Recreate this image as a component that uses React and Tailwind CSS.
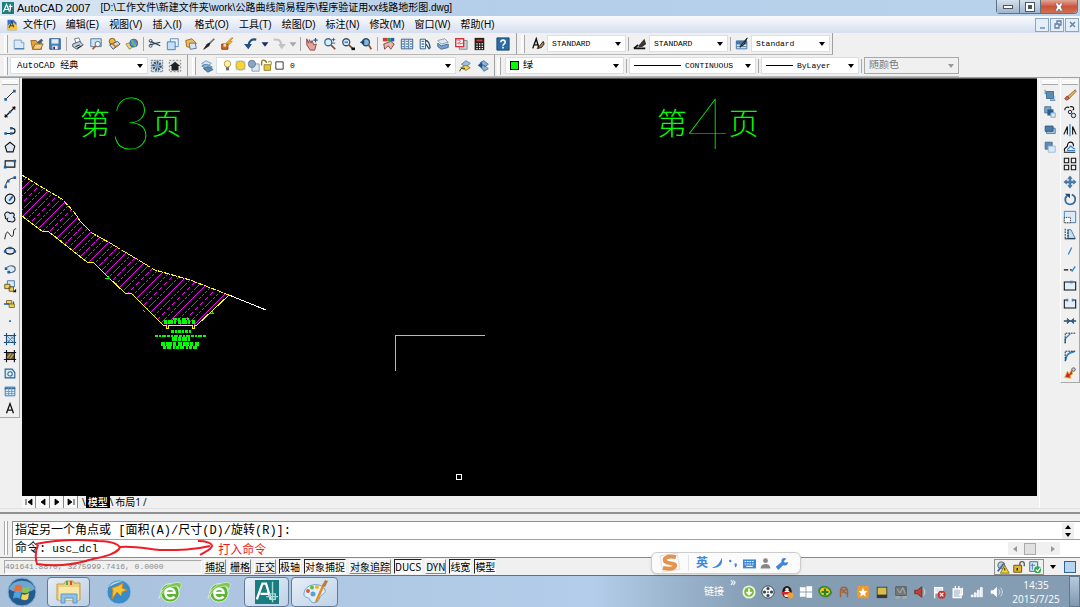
import React from "react";

const B = "#1f5f9f";
const K = "#111111";
const O = "#e8a33a";

/* 16x16 drawings, keyed by command name */
const art = {
  app: <><rect width="16" height="16" fill="#1f7f80" /><path d="M2 13 6 3l4 10M4 10h5M11 3v10M9 6h5M9 12h6" stroke="#fff" strokeWidth="1.6" fill="none" /><path d="M13 9v6M10 12h6" stroke="#0b3b3c" /></>,
  doc: <><path d="M2 1h8l4 4v10H2z" fill="#3a76c4" /><path d="M1 15 3 8l6-4 6 5v6z" fill="#f3c545" /><path d="M4 12 8 3l2 8M5 9h5" stroke="#334" strokeWidth="1.3" fill="none" /></>,
  new: <><path d="M2.5 3.5h8l3 3v7h-11z" fill="#dbeaf8" stroke="#6f9cc8" /><path d="M10.5 3.5v3h3" fill="#fff" stroke="#6f9cc8" /><path d="M3 13.5h11" stroke={B} /></>,
  open: <><path d="M1 4h6l1 2h5v8H3z" fill={O} stroke="#8f6420" /><path d="M3 14 6 8h9l-3 6z" fill="#f4cf7e" stroke="#8f6420" /><path d="M8 6l5-4 2 2-4 4z" fill="#44607c" /></>,
  save: <><path d="M2 2h12v12H2z" fill="#4b84bb" stroke="#1e4f80" /><path d="M4 2.5h8v5H4z" fill="#dcecf9" /><path d="M5 10h6v4H5z" fill="#eef" /><path d="M6 11h2v3H6z" fill="#234" /></>,
  print: <><path d="M4 2l5-1 2 5-5 2z" fill="#fff" stroke="#57738e" /><path d="M2 8l8-3 4 4-7 5-5-3z" fill="#c5d0dc" stroke="#3b5065" /><path d="M5 11l5-2M7 13l5-3" stroke={K} /></>,
  preview: <><path d="M2 2h12v9H2z" fill="#cfe2f5" stroke="#47759f" /><circle cx="10" cy="8" r="3" fill="#eef7ff" stroke="#566" /><path d="M8 10l-4 4" stroke="#a5572b" strokeWidth="2" /></>,
  publish: <><circle cx="6" cy="5" r="3.5" fill="#f1b63f" stroke="#7d5413" /><path d="M3 9l9-4 3 3-8 6z" fill="#d4dde6" stroke="#38495a" /><path d="M8 12l5-3M5 7l5 4" stroke="#c77716" strokeWidth="1.5" /></>,
  web: <><path d="M1 8l9-3 4 3-9 6z" fill="#f1cf6f" stroke="#8e8a50" /><circle cx="10" cy="7" r="4.5" fill="#4f93d3" stroke="#285f94" /><path d="M7 4c3 1 1 3 3 4s2 2 1 3" stroke="#75bd55" strokeWidth="2" fill="none" /><path d="M12 4l2 2" stroke="#d43" strokeWidth="1.5" /></>,
  cut: <><path d="M3 5l11 5M2 9l12-3" stroke="#2c4255" strokeWidth="1.3" /><circle cx="3" cy="4.5" r="1.7" fill="none" stroke="#2c4255" /><circle cx="3" cy="10" r="1.7" fill="none" stroke="#2c4255" /></>,
  copy: <><path d="M5 2h9v9H5z" fill="#eaf3fc" stroke="#5088bd" /><path d="M1.5 5.5h9v9h-9z" fill="#c7dff4" stroke="#397ab7" /></>,
  paste: <><path d="M2 4l7-2 5 5-3 6-8-2z" fill="#f1bb59" stroke="#946219" /><path d="M6 7h7l1 6-7 1z" fill="#d6e7f6" stroke="#4e7092" /></>,
  brush: <><path d="M14 2 8 8" stroke="#607280" strokeWidth="2" /><path d="M9 7l-3 1-4 6 6-4z" fill="#24211e" stroke="#24211e" /></>,
  block: <><path d="M2 8h7v6H2z" fill="#d66829" stroke="#6e3718" /><path d="M4 8h3v3H4z" fill="#f7d9b0" /><path d="M13 1 7 7h3l-3 5 7-7h-3l4-4z" fill="#f5b326" stroke="#a66312" strokeWidth=".6" /></>,
  undo: <><path d="M14 3C9 2 6 4 5 10" fill="none" stroke="#20507d" strokeWidth="2.4" /><path d="M0 8h9l-4 6z" fill="#20507d" /></>,
  redo: <><path d="M2 3c6-1 8 1 9 7" fill="none" stroke="#bfc3c7" strokeWidth="2.4" /><path d="M7 8h9l-5 6z" fill="#bfc3c7" /></>,
  down: <path d="M4 6h8l-4 5z" fill="#1c2d66" />,
  downOff: <path d="M4 6h8l-4 5z" fill="#aaa" />,
  pan: <><path d="M2 2l2 5 1-4 2 4 1-3 2 5 3-1-2 7H6L2 9z" fill="#e4a49c" stroke="#82413d" /><path d="M12 1v5M9.5 3.5h5" stroke={B} strokeWidth="1.4" /></>,
  zoom: <><circle cx="6" cy="6" r="4" fill="#dcecfa" stroke="#3c6c9c" strokeWidth="1.5" /><path d="M9 9l5 5" stroke="#8b4c2e" strokeWidth="2" /><path d="M12 1v4M10 3h4M10 7h4" stroke={B} /></>,
  zoomw: <><circle cx="6" cy="6" r="4" fill="#dcecfa" stroke="#37536f" strokeWidth="1.5" /><path d="M4 5h4v2H4z" fill="#5d87b0" /><path d="M9 9l4 4" stroke="#8b4c2e" strokeWidth="2" /><path d="M12 12h4v3h-4z" fill={K} /></>,
  zoomp: <><circle cx="8" cy="6" r="4" fill="#8ab4dc" stroke="#27517a" strokeWidth="1.5" /><path d="M11 9l3 5" stroke="#8b4c2e" strokeWidth="2" /><path d="M6 3 1 6l5 3z" fill="#17426d" /></>,
  props: <><path d="M1 1h5v4H1z" fill="#d8343a" /><path d="M6 1h4v4H6z" fill="#24a148" /><path d="M10 1h4v4h-4z" fill="#2454cc" /><path d="M2 8l8-3 4 3-4 6-3-4-4 4z" fill="#e4b6aa" stroke="#793d3a" /></>,
  center: <><path d="M1.5 2.5h13v11h-13z" fill="#fff" stroke="#214d79" /><path d="M5.5 3v10M10 3v10" stroke="#214d79" /><path d="M2.5 5h2M2.5 8h2M2.5 11h2M7 5h2M7 8h2M7 11h2M11.5 5h2M11.5 8h2M11.5 11h2" stroke="#3b7ebd" strokeWidth="1.6" /></>,
  palette: <><path d="M2.5 2.5h6v11h-6z" fill="#fff" stroke="#214d79" /><path d="M4 5h3M4 8h3M4 11h3" stroke="#3b7ebd" strokeWidth="1.6" /><path d="M8 4c4 0 5 3 6 9M9 8l4 6" stroke="#214d79" strokeWidth="1.5" fill="none" /></>,
  sheet: <><path d="M2 4l8-2 4 4-8 2z" fill="#e1e9f0" stroke="#8296a8" /><path d="M2 7l4 3 8-2v4l-8 2-4-3z" fill="#6fa3d1" stroke="#436990" /></>,
  markup: <><path d="M6 4h9v10H6z" fill="#c9d3db" stroke="#79828c" /><path d="M2 2h9v9H2z" fill="#fff" stroke="#d82e39" strokeWidth="1.6" /><path d="M4 4c4-2 4 3 1 3s2 2 5 0" fill="none" stroke="#d82e39" /></>,
  calc: <><path d="M3 1h11v14H3z" fill="#24211f" /><path d="M5 3h7v2H5z" fill="#d53c30" /><path d="M5 7h1.5v1.5H5zM8 7h1.5v1.5H8zM11 7h1.5v1.5H11zM5 10h1.5v1.5H5zM8 10h1.5v1.5H8zM11 10h1.5v1.5H11zM5 12.500h1.5V14H5zM8 12.500h1.5V14H8zM11 12.500h1.5V14H11z" fill="#fff" /></>,
  help: <><path d="M1 1h14v14H1z" fill="#2d6ba6" stroke="#16436f" /><path d="M5.500 6c0-3.500 5-3 5 0 0 2-2.500 1.500-2.500 4M8 11v2" stroke="#fff" strokeWidth="1.8" fill="none" /></>,
  tstyle: <><path d="M2 13 6 2l3 11M4 9h5" stroke={K} strokeWidth="1.6" fill="none" /><path d="M14 5l-4 5-3 3 5-1 3-4z" fill="#b98548" stroke={K} /></>,
  dstyle: <><path d="M1 13h13M1 13l5-4" stroke={K} strokeWidth="2" /><path d="M13 2 7 9l-1 3 5-1 4-3z" fill="#3b342c" /></>,
  tabstyle: <><path d="M1.500 4.500h12v9h-12z" fill="#dbeaf8" stroke="#356da3" /><path d="M2 5h11v3H2zM6 5v8" fill="#4a83b8" stroke="#356da3" /><path d="M2 11h11" stroke="#356da3" /><path d="M14 1 8 8l-2 3 4-2z" fill="#93612b" stroke={K} /></>,
  gear: <><path d="M1.500 1.500h13v13h-13z" fill="#d5dde5" stroke="#5f7080" strokeDasharray="2 1" /><circle cx="8" cy="8" r="4" fill="none" stroke="#31506f" strokeWidth="3" strokeDasharray="2 1" /><circle cx="8" cy="8" r="2.500" fill="#7ba4cb" /></>,
  home: <><path d="M1.500 1.500h13v13h-13z" fill="#e4e4e4" stroke="#777" strokeDasharray="2 2" /><path d="M8 3l6 5h-2v5H4V8H2z" fill="#1d2227" /></>,
  layers: <><path d="M2 5l5-3 6 3-5 3z" fill="#d7e6f3" stroke="#7799b8" /><path d="M2 8l5-2 7 3-6 3z" fill="#8fb6d8" stroke="#4f7ea8" /><path d="M4 11l5-2 6 3-6 3z" fill="#5d8db8" stroke="#3b688f" /></>,
  bulb: <><circle cx="8" cy="6" r="4" fill="#fff3a7" stroke="#ab8e34" /><path d="M6 10h4v4H6z" fill="#6b7077" /></>,
  sun: <><path d="M2 2h12v12H2z" fill="#b9d5ee" /><circle cx="8" cy="8" r="5.500" fill="#f6d53a" stroke="#c59c2a" /></>,
  freeze: <><path d="M6 6h9v9H6z" fill="#dde8f0" stroke="#7a93a9" /><circle cx="6" cy="6" r="4.500" fill="#8ba6bb" stroke="#587891" /></>,
  lock: <><path d="M2 8V4c0-4 6-3 6 1" fill="none" stroke="#8a7b2a" strokeWidth="1.700" /><path d="M5 7h8v7H5z" fill="#e9c934" stroke="#827222" /><path d="M10 4c4-3 5 1 3 4" stroke="#b39c29" strokeWidth="1.500" fill="none" /></>,
  square: <path d="M3.500 3.500h9v9h-9z" fill="#fff" stroke={K} />,
  layprev: <><path d="M4 6l5-4 5 3-5 4z" fill="#9cc2e3" stroke="#4c7da8" /><path d="M3 10l6-3 5 3-5 3z" fill="#f0d44b" stroke="#8b7923" /><path d="M2 14c1-4 4-4 6-3" stroke={K} fill="none" /></>,
  laystate: <><path d="M5 4l4-2 5 4-4 3zM5 8l4-1 5 4-5 3z" fill="#8fb6d8" stroke="#3f6d95" /><path d="M7 3 2 7l5 4z" fill="#245684" /></>,
  line: <><path d="M3 13 13 3" stroke={K} /><path d="M1.500 11.500h3v3h-3zM11.500 2h3v3h-3z" fill={B} /></>,
  xline: <><path d="M2 14 14 2" stroke={K} strokeWidth="1.400" /><path d="M2 14v-4l4 4zM14 2v4l-4-4z" fill={K} /><circle cx="8" cy="8" r="1.500" fill={B} /></>,
  pline: <><path d="M3 12h7c5 0 5-6 0-6" stroke={K} strokeWidth="1.300" fill="none" /><path d="M1.500 10.500h3v3h-3zM8 10.500h3v3H8zM8 4.500h3v3H8z" fill={B} /></>,
  polygon: <path d="M8 2.500 13.500 7l-2 6.500h-7L2.500 7z" fill="#dbe8f5" stroke={K} strokeWidth="1.300" />,
  rect: <><path d="M2.500 4.500h11v7h-11z" fill="#e3eef8" stroke={K} strokeWidth="1.300" /><path d="M1 10h3v3H1zM12 3h3v3h-3z" fill={B} /></>,
  arc: <><path d="M3 14C3 7 7 4 14 3" stroke={K} fill="none" /><path d="M1.500 12h3v3h-3zM4.500 5.500h3v3h-3zM12 1.500h3v3h-3z" fill={B} /></>,
  circle: <><circle cx="8" cy="8" r="5.500" fill="#dbe8f5" stroke={K} strokeWidth="1.300" /><path d="M7 10 11 5" stroke={B} strokeWidth="2" /></>,
  cloud: <path d="M3 8C0 4 5 0 8 4c4-2 6 1 4 4 4 3 0 7-4 5-2 1-4-1-3-3-2 1-3-1-2-2z" fill="#dbe8f5" stroke={K} strokeWidth="1.200" />,
  spline: <path d="M2 14C4 2 6 6 8 9s4 2 4-2 1-5 3-5" fill="none" stroke={K} strokeWidth="1.100" />,
  ellipse: <><ellipse cx="8" cy="8" rx="5.500" ry="3.500" fill="#dbe8f5" stroke={K} strokeWidth="1.300" /><path d="M1 7h3v3H1zM12 7h3v3h-3zM6.500 3h3v3h-3z" fill={B} /></>,
  earc: <><path d="M5 6c3-3 9-2 9 2s-6 5-8 3" fill="#dbe8f5" stroke="#526b83" strokeWidth="1.300" /><path d="M2 6h3v3H2zM5 10h3v3H5z" fill={B} /></>,
  insert: <><path d="M5 2h8v7H5z" fill="#dbeaf8" stroke="#396fa1" /><path d="M2 6h6v5H2zM7 9h5v5H7z" fill="#f0ce54" stroke="#5a4f22" /><path d="M15 11v4h-4z" fill={K} /></>,
  mkblock: <><path d="M4 4h6v4H4z" fill="#f0ce54" stroke="#7a6929" /><path d="M7 8h6v4H7z" fill="#f0ce54" stroke="#7a6929" /><path d="M1 8h6M12 5v3" stroke={B} strokeWidth="1.500" /></>,
  point: <path d="M7 7h2v2H7z" fill={B} />,
  hatch: <><path d="M4 4h9v8H4z" fill="#cfe3f5" /><path d="M1 4h14M1 12h14M4 1v14M13 1v14" stroke="#164d80" strokeWidth="1.300" /><path d="M5 5l7 7M5 9l3 3M9 5l3 3M12 5l-7 7" stroke="#477baa" /></>,
  grad: <><path d="M4 4h9v8H4z" fill="#5c5a50" /><path d="M1 4h14M1 12h14M4 1v14M13 1v14" stroke={K} strokeWidth="1.300" /><path d="M5 10l4-5M8 11l4-5" stroke="#d1a33b" strokeWidth="1.500" /></>,
  region: <><path d="M2.500 3.500h8l3 4v6h-11z" fill="#dceaf7" stroke="#296294" strokeWidth="1.300" /><circle cx="8" cy="9" r="2.500" fill="#fff" stroke="#296294" strokeWidth="1.200" /></>,
  table: <><path d="M2.500 3.500h11v10h-11z" fill="#e6f1fb" stroke="#326ba0" /><path d="M2 4h12v2H2z" fill="#326ba0" /><path d="M2.500 8.500h11M2.500 11h11M6.500 4v9M10 4v9" stroke="#6495c1" /></>,
  mtext: <path d="M4 14 8 3l4 11M5.500 10.500h5" fill="none" stroke={K} strokeWidth="1.500" />,
  front: <><path d="M8 9h6v5H8z" fill="#b9d6ef" /><path d="M4 4h8v8H4z" fill="#5f8bb3" stroke="#3d6a94" /><path d="M2.500 2v4M2 6.500h2M14 14H8" stroke="#356b9b" /></>,
  back: <><path d="M2 2h7v7H2z" fill="#7fa6c8" stroke="#3d6a94" /><path d="M5 5h7v7H5z" fill="#2c5b87" /><path d="M9 9h5v5H9z" fill="#d9e8f5" stroke="#7fa6c8" /></>,
  above: <><path d="M4 6h10v6H4z" fill="#a7c6e0" stroke="#4e7ba5" /><path d="M2.500 3.500h9v6h-9z" fill="#4c7ba7" stroke="#28537c" /></>,
  under: <><path d="M2.500 2.500h8v8h-8z" fill="#5f8bb3" stroke="#3d6a94" /><path d="M6 7h8v7H6z" fill="#d9e8f5" stroke="#9cbad4" /></>,
  erase: <><path d="M14 2 5 10l2 2 8-8z" fill="#f0b84b" stroke="#8b6125" /><path d="M5 9l-3 3 2 2 3-2z" fill="#df6256" stroke="#7d3832" /></>,
  copyobj: <><path d="M2 6c0-4 4-4 5-3M8 2c5-1 5 3 3 4" fill="none" stroke={K} strokeWidth="1.300" /><circle cx="8" cy="8" r="2" fill="#dce8f3" stroke={K} /><circle cx="12" cy="12" r="2.500" fill="#dce8f3" stroke={K} /></>,
  mirror: <><path d="M8 1v14" stroke="#3083cb" strokeWidth="1.400" /><path d="M1 13 5 4v9M15 13l-4-9v9" fill="none" stroke={K} strokeWidth="1.300" /></>,
  offset: <><path d="M1 14h13M2 13c-2-4 2-4 3-6 0-6 7-6 7 0" fill="none" stroke={K} strokeWidth="1.300" /><path d="M5 12h9M5 12c0-3 3-2 3-5 3 0 2 3 6 3" fill="none" stroke="#3083cb" strokeWidth="1.300" /></>,
  array: <path d="M1.500 1.500h5v5h-5zM9.500 1.500h5v5h-5zM1.500 9.500h5v5h-5zM9.500 9.500h5v5h-5z" fill="#eaf1f8" stroke={K} strokeWidth="1.200" />,
  move: <path d="M8 1l2.500 3H9v3h3V5.500L15 8l-3 2.500V9H9v3h1.500L8 15l-2.500-3H7V9H4v1.500L1 8l3-2.500V7h3V4H5.500z" fill="#4681b4" stroke="#1d4f7d" strokeWidth=".5" />,
  rotate: <><path d="M10 3c6 2 5 11-2 11-6 0-7-7-3-10" fill="none" stroke="#376c9c" strokeWidth="2" /><path d="M2 2h6v5z" fill="#1d4f7d" /></>,
  scale: <><path d="M1.500 1.500h13v13h-13z" fill="#dceaf7" stroke="#3776ae" /><path d="M1.500 8.500h7v6h-7z" fill="#fff" stroke={K} strokeDasharray="1 1" /></>,
  stretch: <><path d="M6 3h3l5 10H6z" fill="#c7dff4" stroke="#3776ae" /><path d="M2.500 2v11M5.500 3v10" stroke={K} strokeDasharray="2 1" /><path d="M2 13.500h12" stroke={K} /></>,
  trim: <path d="M6 12 10 4" stroke="#3083cb" strokeWidth="1.500" />,
  extend: <><path d="M1 9h5M8 9h2" stroke={K} strokeWidth="1.300" /><path d="M10 11l4-6" stroke="#3083cb" strokeWidth="1.500" /></>,
  breakpt: <><path d="M1.500 3.500h13v9h-13z" fill="#e3eef8" stroke={K} strokeWidth="1.200" /><path d="M8 2h3v3H8z" fill="#3083cb" /></>,
  breakit: <><path d="M5 3.500H1.500v9h13v-9H11" fill="#e3eef8" stroke={K} strokeWidth="1.200" /><path d="M4 2h2v3H4zM10 2h2v3h-2z" fill="#3083cb" /></>,
  join: <><path d="M1 8h14" stroke={K} strokeWidth="1.300" /><path d="M5 5l3 3-3 3zM12 5 9 8l3 3z" fill="#27608f" stroke="#27608f" /></>,
  chamfer: <><path d="M2.500 14V9l6-6" fill="none" stroke="#3083cb" strokeWidth="1.500" /><path d="M2.500 14V2.500h12" fill="none" stroke={K} strokeDasharray="2 1" /></>,
  fillet: <><path d="M3 13c0-6 3-9 10-10" fill="none" stroke="#3083cb" strokeWidth="2" /><path d="M2.500 14V2.500h12" fill="none" stroke={K} strokeDasharray="2 1" /></>,
  explode: <><path d="M2 13l3-7 2 3 3-5 1 5-3 2 1 3z" fill="#c92b29" stroke="#e9b52e" /><circle cx="12" cy="4" r="2" fill="#c5ced7" stroke="#555" /></>,
  moon: <path d="M13 1c3 8-4 14-12 12 6-1 10-5 12-12z" fill="#3d87d8" />,
  punct: <><circle cx="4" cy="5" r="1.500" fill="#3d87d8" /><path d="M9 8h3v3l-2 2z" fill="#3d87d8" /></>,
  keyb: <><path d="M0 3h16v11H0z" fill="#3d87d8" /><path d="M2 5.500h12M2 8.500h12" stroke="#fff" strokeWidth="1.300" strokeDasharray="2 1" /><path d="M4 11.500h8" stroke="#fff" strokeWidth="1.300" /></>,
  person: <><circle cx="8" cy="4.500" r="3" fill="#868686" /><path d="M2 14c0-7 12-7 12 0z" fill="#868686" /></>,
  wrench: <path d="M1 12l7-6c-1-3 2-6 6-4l-3 3 1 2 4-1c0 4-3 5-6 4l-6 6z" fill="#3d87d8" />,
  dl: <><circle cx="8" cy="8" r="6.500" fill="#7cba3e" stroke="#e9f3df" strokeWidth="2" /><path d="M8 4v6M5 8l3 3 3-3" fill="none" stroke="#fff" strokeWidth="2" /></>,
  fan: <><circle cx="8" cy="8" r="7" fill="#eef1f4" stroke="#37444e" /><circle cx="8" cy="4" r="1.800" fill="#37444e" /><circle cx="8" cy="12" r="1.800" fill="#37444e" /><circle cx="4" cy="8" r="1.800" fill="#37444e" /><circle cx="12" cy="8" r="1.800" fill="#37444e" /><circle cx="8" cy="8" r="1" fill="#37444e" /></>,
  qq: <><ellipse cx="8" cy="8" rx="5.500" ry="7" fill="#1c1c1c" /><ellipse cx="8" cy="10" rx="3.500" ry="4" fill="#f6f6f6" /><path d="M2 8h11v3H2z" fill="#d8272a" /><circle cx="8" cy="5" r="2" fill="#e8d9c8" /><circle cx="12" cy="12" r="3.500" fill="#eea32a" /></>,
  win: <path d="M1 2.500h6.500v5H1zM8.500 1.500H15v6H8.500zM1 8.500h6.500v5H1zM8.500 8.500H15v6H8.500z" fill="#fff" />,
  guard: <><path d="M1 6c4-7 13-4 14 3-5 7-13 4-14-3z" fill="#f4c820" stroke="#388834" strokeWidth="2" /><path d="M8 4v8M4 8h8" stroke="#258330" strokeWidth="2.500" /></>,
  fox: <path d="M4 14V7c0-6 8-6 8 0v7M5 5l6 5M11 4l-5 5" fill="none" stroke="#a45f3c" strokeWidth="1.700" />,
  star: <><path d="M2 1h12l1 7-1 7H2L1 8z" fill="#ed9b2d" /><path d="M8 3l1.500 3.500L13 7l-2.500 2.500L11 13l-3-2-3 2 .5-3.500L3 7l3.500-.5z" fill="#fff" /></>,
  card: <><path d="M2 2h12v13H2z" fill="#35393b" /><path d="M3 3h10v8H3z" fill="#d6bd4e" /></>,
  net: <><path d="M2 2h12v10H2z" fill="#74797b" stroke="#4d5356" /><path d="M3 4l4 5 3-6 3 7M2 13h4v2H2M10 13h4v2h-4" stroke="#b3b6a9" fill="none" /></>,
  spk: <><path d="M2 6h3l5-4v12l-5-4H2z" fill="#c43e32" stroke="#702a21" /><path d="M12 4c2 2 2 6 0 8" stroke="#ddd" fill="none" /></>,
  flag: <><path d="M3 2v13M3 3h9v6H3z" fill="#dfe8f0" stroke="#fff" strokeWidth="1.500" /><circle cx="11" cy="11" r="4.500" fill="#c92f2a" /><path d="M9 9l4 4M13 9l-4 4" stroke="#fff" strokeWidth="1.500" /></>,
  plug: <><path d="M2.500 4.500h9v10h-9z" fill="#c6d3df" stroke="#fff" strokeWidth="1.500" /><path d="M5 1v4M9 1v4M13 3v8h-4" stroke="#fff" strokeWidth="1.500" fill="none" /></>,
  bars: <path d="M1.500 11.500h2v2h-2zM5 9h2v4.500H5zM8.500 6h2v7.500h-2zM12 3h2v10.500h-2z" fill="#dce7f0" stroke="#fff" />,
  vol: <><path d="M2 6h3l4-4v12l-4-4H2z" fill="#fff" /><path d="M11 5c2 2 2 4 0 6M13 3c3 3 3 7 0 10" stroke="#dce7f0" fill="none" /></>,
  warn: <><circle cx="6" cy="6" r="4" fill="#c1cad2" stroke="#4e5e6d" /><path d="M2 13 9 4" stroke="#3e6f9e" strokeWidth="2" /><path d="M10 6l5 9H5z" fill="#f5d432" stroke="#7f701c" /><path d="M10 9v3" stroke={K} /></>,
  slock: <><path d="M9 7V4c0-3 5-3 5 0v3" fill="none" stroke="#555" strokeWidth="1.500" /><path d="M2 6h9v8H2z" fill="#dfb52b" stroke="#5e4c12" /><path d="M6 9v3" stroke={K} strokeWidth="1.500" /></>,
  docok: <><path d="M2 2h9v11H2z" fill="#d8e8f5" stroke="#335f89" /><path d="M5 4v7M3 6h5" stroke="#3b77ad" /><circle cx="11" cy="11" r="4" fill="#36a853" /><path d="M9 11l2 2 3-4" stroke="#fff" fill="none" strokeWidth="1.300" /></>,
};

function Icon({ name, className = "size-4" }) {
  return (
    <svg viewBox="0 0 16 16" className={`${className} shrink-0`} aria-hidden="true">
      {art[name]}
    </svg>
  );
}

function Tool({ name, className = "h-[18px] w-[18px]" }) {
  return (
    <button type="button" aria-label={name} className={`${className} flex shrink-0 items-center justify-center`}>
      <Icon name={name} className="size-[14px]" />
    </button>
  );
}

const Grip = () => <span className="mx-[2px] h-[18px] w-[4px] shrink-0 border-x border-[#a8a8a8] border-l-white bg-[#f8f8f8]" />;
const Sep = () => <span className="mx-[2px] h-[14px] w-px shrink-0 bg-[#a8a8a8]" />;

const Caret = ({ off }) => (
  <svg viewBox="0 0 6 4" className="pointer-events-none h-1 w-1.5 shrink-0" aria-hidden="true">
    <path d="M0 0h6L3 4z" fill={off ? "#999" : "#000"} />
  </svg>
);

function Picker({ label, value, width, lead, off, text = "text-[8px]" }) {
  return (
    <label className={`${width} flex h-[17px] shrink-0 items-center gap-1 border px-1 ${off ? "border-[#a8a8a8] bg-[#f0f0f0] text-[#777]" : "border-[#d5e0e8] bg-white text-black"}`}>
      {lead}
      <select aria-label={label} disabled={off} className={`min-w-0 flex-1 appearance-none bg-transparent font-['Liberation_Mono','Noto_Sans_CJK_SC',monospace] leading-3 opacity-100 ${text}`}>
        <option>{value}</option>
      </select>
      <Caret off={off} />
    </label>
  );
}

const Bar = ({ children, className = "" }) => (
  <div role="toolbar" className={`flex h-[22px] items-center border-b border-b-[#b8b8b8] ${className}`}>{children}</div>
);

const menus = ["文件(F)", "编辑(E)", "视图(V)", "插入(I)", "格式(O)", "工具(T)", "绘图(D)", "标注(N)", "修改(M)", "窗口(W)", "帮助(H)"];
const drawTools = ["line", "xline", "pline", "polygon", "rect", "arc", "circle", "cloud", "spline", "ellipse", "earc", "insert", "mkblock", "point", "hatch", "grad", "region", "table", "mtext"];
const modifyTools = ["erase", "copyobj", "mirror", "offset", "array", "move", "rotate", "scale", "stretch", "trim", "extend", "breakpt", "breakit", "join", "chamfer", "fillet", "explode"];
const orderTools = ["front", "back", "above", "under"];
const tray = ["dl", "fan", "qq", "win", "guard", "fox", "star", "card", "net", "spk", "flag", "plug", "bars", "vol"];
const modes = [
  ["捕捉", false], ["栅格", false], ["正交", false], ["极轴", true], ["对象捕捉", true],
  ["对象追踪", false], ["DUCS", true], ["DYN", false], ["线宽", true], ["模型", true],
];

function ToolColumn({ names, className, size }) {
  return (
    <div role="toolbar" className={`flex w-5 flex-col items-center pt-0.5 ${className}`}>
      <span className="mb-px h-[5px] w-4 shrink-0 border-y border-[#a8a8a8] border-t-white bg-[#f8f8f8]" />
      <div className={`grid auto-rows-fr ${size}`}>
        {names.map((n) => <Tool key={n} name={n} className="h-full w-[18px]" />)}
      </div>
    </div>
  );
}

function TitleBar() {
  return (
    <header className="flex h-4 items-center bg-linear-to-r from-[#dbe7f3] via-[#b4cde9] via-45% to-[#b9d3ec] pl-0.5 text-[10px]">
      <Icon name="app" className="size-3" />
      <h1 className="flex flex-1 items-center gap-2.5 pl-[3px] font-['Liberation_Sans','Noto_Sans_CJK_SC',sans-serif] leading-3 whitespace-nowrap">
        <span className="text-[11px]">AutoCAD 2007</span>
        <span>[D:\工作文件\新建文件夹\work\公路曲线简易程序\程序验证用xx线路地形图.dwg]</span>
      </h1>
      <div className="mr-[2px] flex h-[14px] self-start rounded-b border border-t-0 border-[#5f7387]">
        <button type="button" aria-label="最小化" className="flex w-[22px] items-center justify-center bg-linear-to-b from-[#d5e1ec] to-[#9fb6cc]">
          <span className="h-1 w-2.5 border border-[#4a5561] bg-white" />
        </button>
        <button type="button" aria-label="还原" className="flex w-[22px] items-center justify-center border-x border-[#5f7387] bg-linear-to-b from-[#d5e1ec] to-[#9fb6cc]">
          <span className="size-2 border-2 border-white bg-[#4a5561] outline outline-[#4a5561]" />
        </button>
        <button type="button" aria-label="关闭" className="flex w-[36px] items-center justify-center rounded-br bg-linear-to-b from-[#e0a799] via-[#c9543a] to-[#d2704d]">
          <svg viewBox="0 0 10 8" className="h-2 w-2.5"><path d="M1 0h3l1 2 1-2h3L7 4l2 4H6L5 6 4 8H1l2-4z" fill="#fff" stroke="#4a4a5a" strokeWidth=".6" /></svg>
        </button>
      </div>
    </header>
  );
}

function MenuBar() {
  const win = "flex h-[14px] w-[14px] items-center justify-center border border-[#8aa5bf] bg-[#e4eef8]";
  return (
    <nav className="flex h-[17px] items-center bg-linear-to-b from-[#f8fafd] to-[#d6dff0] pl-1.5 text-[10px]">
      <Icon name="doc" className="size-3" />
      <ul className="flex flex-1 gap-[10px] pl-[5px] font-['Liberation_Sans','Noto_Sans_CJK_SC',sans-serif]">
        {menus.map((m) => <li key={m} className="min-w-[32px]"><button type="button" className="block whitespace-nowrap">{m}</button></li>)}
      </ul>
      <div className="flex gap-px pr-px">
        {["M3 9h5", "M3 5h4v4H3zM5 5V2h4v4H7", "M3 3l5 5M8 3 3 8"].map((d, i) => (
          <button key={d} type="button" aria-label={["最小化窗口", "还原窗口", "关闭窗口"][i]} className={win}>
            <svg viewBox="0 0 11 11" className="size-[11px]"><path d={d} fill="none" stroke="#5f7f9e" strokeWidth="1.300" /></svg>
          </button>
        ))}
      </div>
    </nav>
  );
}

function Toolbars() {
  const edge = "border-r border-r-[#a0a0a0]";
  return (
    <div className="h-[44px] overflow-hidden bg-[#f0f0f0]">
      <div className="flex">
        <Bar className={`w-[517px] pl-0.5 ${edge}`}>
          <Grip />
          {["new", "open", "save"].map((n) => <Tool key={n} name={n} />)}
          <Sep />
          {["print", "preview", "publish", "web"].map((n) => <Tool key={n} name={n} />)}
          <Sep />
          {["cut", "copy", "paste", "brush", "block"].map((n) => <Tool key={n} name={n} />)}
          <span className="w-[6px]" />
          <Tool name="undo" />
          <Tool name="down" className="w-[10px]" />
          <Tool name="redo" />
          <Tool name="downOff" className="w-[10px]" />
          <Sep />
          {["pan", "zoom", "zoomw", "zoomp"].map((n) => <Tool key={n} name={n} />)}
          <Sep />
          {["props", "center", "palette", "sheet", "markup", "calc"].map((n) => <Tool key={n} name={n} />)}
          <span className="w-[6px]" />
          <Tool name="help" />
        </Bar>
        <Bar className={`w-[316px] pl-0.5 ${edge}`}>
          <Grip />
          <span className="w-0.5" />
          <Tool name="tstyle" />
          <Picker label="文字样式" value="STANDARD" width="w-[79px]" />
          <Sep />
          <Tool name="dstyle" />
          <Picker label="标注样式" value="STANDARD" width="w-[79px]" />
          <Sep />
          <Tool name="tabstyle" />
          <Picker label="表格样式" value="Standard" width="w-[79px]" />
        </Bar>
      </div>
      <div className="flex">
        <Bar className={`w-[188px] pl-0.5 ${edge}`}>
          <Grip />
          <Picker label="工作空间" value="AutoCAD 经典" width="w-[138px]" text="pl-0.5 text-[9px]" />
          <Tool name="gear" />
          <Tool name="home" />
        </Bar>
        <Bar className={`w-[307px] pl-0.5 ${edge}`}>
          <Grip />
          <Tool name="layers" />
          <Picker
            label="图层"
            value="0"
            width="w-[240px]"
            lead={<span className="flex">{["bulb", "sun", "freeze", "lock", "square"].map((n) => <Icon key={n} name={n} className="size-[13px]" />)}</span>}
          />
          <Tool name="layprev" />
          <Tool name="laystate" />
        </Bar>
        <Bar className="w-[464px]">
          <Grip />
          <span className="w-0.5" />
          <Picker label="颜色" value="绿" width="w-[119px]" text="text-[10px]" lead={<span className="size-[9px] border border-black bg-[#00ff00]" />} />
          <Sep />
          <Picker label="线型" value="CONTINUOUS" width="w-[127px]" lead={<span className="h-px w-[47px] bg-black" />} />
          <Sep />
          <Picker label="线宽" value="ByLayer" width="w-[98px]" lead={<span className="h-px w-[27px] bg-black" />} />
          <Sep />
          <Picker label="打印样式" value="随颜色" width="w-[95px]" text="text-[10px]" off />
        </Bar>
      </div>
    </div>
  );
}

const slope = "22,175 38,185 62,199 74,212 80,221 92,233 110,243 145,264 155,270 190,280 229,295";
const base = "22,216 42,231 49,232 87,262 94,263 107,276 125,293 131,293 163,325 166,325 166,328 168,328 168,325 192,325 192,328 194,328 194,325 197,325 229,295";
const hatchStarts = Array.from({ length: 66 }, (_, i) => i * 7 - 175);

function Canvas() {
  return (
    <section aria-label="绘图区" className="relative min-h-[417px] flex-1 overflow-hidden bg-black font-['Noto_Sans_CJK_SC',sans-serif] text-[#00ff00]">
      <svg className="absolute inset-0 h-full w-full" shapeRendering="crispEdges" fill="none" aria-hidden="true">
        <defs>
          <clipPath id="fill"><path d="M22 175 38 185 62 199 74 212 80 221 92 233 110 243 145 264 155 270 190 280 229 295 197 325 163 325 131 293 125 293 107 276 94 263 87 262 49 232 42 231 22 216z" /></clipPath>
        </defs>
        <g transform="translate(-22 -79)">
          <g clipPath="url(#fill)" stroke="#ff00ff">
            {hatchStarts.map((x, i) => (
              <path key={x} d={`M${x} 330 l170 -170`} strokeDasharray={i % 4 === 0 ? "none" : i % 2 ? "3 1" : "5 2"} />
            ))}
          </g>
          <polyline points={slope} stroke="#ffff00" strokeDasharray="6 1" />
          <polyline points={base} stroke="#ffff00" />
          <path d="M229 295 266 310" stroke="#fff" />
          <path d="M105 278h5M108 276v3M143 310l2 2M210 313h4M212 311v3" stroke="#00ff00" />
          <g stroke="#00ff00">
            <path d="M164 322h32" strokeWidth="4" strokeDasharray="3 1 5 1 2 2" />
            <path d="M173 319h18" strokeWidth="2" strokeDasharray="4 1 2 2" />
            <path d="M171 331h20" strokeWidth="3" strokeDasharray="3 1 2 1" />
            <path d="M155 335.500h51" strokeWidth="2" strokeDasharray="3 1 2 1 4 1" />
            <path d="M172 339h18" strokeWidth="4" strokeDasharray="5 1 3 1" />
            <path d="M161 343.500h38" strokeWidth="4" strokeDasharray="4 1 6 1 3 2" />
            <path d="M163 347.500h35" strokeWidth="3" strokeDasharray="3 1 4 2 2 1" />
          </g>
          <path d="M395.500 371v-36M395 335.500h90" stroke="#b8b8b8" />
          <path d="M456.500 474.500h5v5h-5z" stroke="#fff" />
        </g>
      </svg>
      <p className="absolute top-[6px] left-[58px] flex items-center text-[30px] leading-[72px] font-light">
        第<span className="font-['Lato',sans-serif] text-[72px] font-thin">3</span>页
      </p>
      <p className="absolute top-[6px] left-[635px] flex items-center text-[30px] leading-[72px] font-light">
        第<span className="font-['Lato',sans-serif] text-[72px] font-thin">4</span>页
      </p>
    </section>
  );
}

function SheetTabs() {
  const nav = ["M2 1v6M8 1v6L4 4z", "M7 1v6L3 4z", "M3 1v6l4-3z", "M2 1v6l4-3zM8 1v6"];
  return (
    <div className="flex h-3 items-stretch bg-[#f0f0f0] text-[10px] leading-3">
      {nav.map((d, i) => (
        <button key={d} type="button" aria-label={["首个", "上一个", "下一个", "末个"][i]} className="flex w-[14px] items-center justify-center border-r border-[#888] bg-[#f8f8f8]">
          <svg viewBox="0 0 10 8" className="h-2 w-2.5"><path d={d} fill="#000" stroke="#000" strokeWidth=".8" /></svg>
        </button>
      ))}
      <span className="ml-1">\</span>
      <button type="button" className="bg-black px-0.5 font-medium text-white">模型</button>
      <span>\</span>
      <button type="button" className="px-0.5">布局1</button>
      <span>/</span>
    </div>
  );
}

function CommandLine() {
  return (
    <section aria-label="命令行" className="relative flex h-[45px] border-t-2 border-[#909090] bg-[#f0f0f0] pt-[7px] font-['Liberation_Mono','Noto_Sans_CJK_SC',monospace] text-[12px]">
      <span className="mx-1 h-[34px] w-1 shrink-0 border-x border-[#a8a8a8] bg-white" />
      <div className="flex-1 border-t border-l border-[#909090] bg-white">
        <div className="flex h-[18px] items-center border-b border-[#a0a0a0] pr-[6px] pl-0.5">
          <p className="flex-1 leading-4 whitespace-nowrap">指定另一个角点或 [面积(A)/尺寸(D)/旋转(R)]:</p>
          <span className="flex h-4 w-3 flex-col items-center justify-between bg-[#f0f0f0] py-0.5">
            <span className="flex rotate-180"><Caret /></span>
            <Caret />
          </span>
        </div>
        <div className="flex h-[17px] items-center pr-[20px] pl-0.5">
          <label htmlFor="cmd" className="leading-4">命令:</label>
          <input id="cmd" defaultValue="usc_dcl" className="ml-1.5 w-[166px] bg-transparent text-[11px] leading-4 outline-none" />
          <span className="font-['Noto_Sans_CJK_SC',sans-serif] text-[12px] leading-4 text-[#ee1c24]">打入命令</span>
          <span className="ml-auto flex h-[13px] w-[52px] items-center justify-between bg-[#f0f0f0] px-1">
            <span className="rotate-90"><Caret off /></span>
            <span className="mr-2 h-3 w-3 border border-[#aaa] bg-[#e0e0e0]" />
            <span className="-rotate-90"><Caret off /></span>
          </span>
        </div>
      </div>
      <svg className="pointer-events-none absolute top-[24px] left-[30px] z-10 h-[34px] w-[190px]" viewBox="0 0 190 34" fill="none" stroke="#ee1c24" strokeWidth="2" aria-hidden="true">
        <path d="M6 6C30 1 56 2 68 3c16 0 24 5 21 8-6 7-20 8-33 12-18 5-34 5-49 3C5 20 6 12 8 7" />
        <path d="M90 9c15-1 22 1 40 3 20 0 34 0 50-4M168 3c8 0 14 2 14 5-1 4-6 5-12 9" />
      </svg>
    </section>
  );
}

function StatusBar() {
  return (
    <div className="flex h-[18px] items-center gap-0.5 border-t border-[#888] bg-[#f0f0f0] pl-1 text-[10px]">
      <output className="h-3.5 w-[198px] border border-[#a8a8a8] border-r-white border-b-white font-['Liberation_Mono',monospace] text-[8px] leading-3 text-[#8a8a8a]">491641.8870, 3275999.7416, 0.0000</output>
      <div className="flex gap-[3px]">
        {modes.map(([name, on]) => (
          <button key={name} type="button" aria-pressed={on} className={`h-[15px] border font-['Liberation_Sans_Narrow','Noto_Sans_CJK_SC',sans-serif] leading-[13px] ${on ? "border-[#222] border-r-white border-b-white bg-[#f8f8f8]" : "border-white border-r-[#888] border-b-[#888]"}`}>{name}</button>
        ))}
      </div>
      <div className="ml-auto flex items-center gap-1.5">
        <span className="flex gap-0.5 border border-[#909090] px-px">
          {["warn", "slock", "docok"].map((n) => <Icon key={n} name={n} className="size-[14px]" />)}
        </span>
        <Caret />
        <button type="button" aria-label="全屏" className="mr-1 ml-0.5 size-3 border border-[#2f6399] bg-[#b5d5f1]" />
      </div>
    </div>
  );
}

function ImeBar() {
  return (
    <aside aria-label="输入法" className="absolute -top-[24px] left-[651px] flex h-[22px] w-[150px] items-center rounded-md border border-[#ccc] bg-[#fbfbfb] pl-[7px] shadow">
      <svg viewBox="0 0 22 20" className="h-5 w-[22px]" aria-hidden="true">
        <path d="M1 3 18 0l3 16-17 3z" fill="#fff" stroke="#dedede" />
        <path d="M17 4C8 2 3 6 7 9c4 2 10 1 9 4-1 3-7 3-12 2" fill="none" stroke="#e5924f" strokeWidth="4" />
      </svg>
      <span className="mr-[7px] ml-[7px] h-4 w-px bg-[#e3e3e3]" />
      <span className="text-[12px] leading-none font-bold text-[#3d87d8]">英</span>
      <span className="ml-[3px] flex gap-[3px]">
        {["moon", "punct", "keyb", "person", "wrench"].map((n) => <Icon key={n} name={n} className="size-[13px]" />)}
      </span>
    </aside>
  );
}

function Browser() {
  return (
    <svg viewBox="0 0 26 26" className="size-6" aria-hidden="true">
      <circle cx="13" cy="14" r="10" fill="#5bb533" stroke="#eaf6e2" />
      <path d="M1 20C2 10 14 1 24 3c2 2 1 5-1 8 0-4-2-5-6-4C10 8 5 13 1 20z" fill="#79c94b" stroke="#eaf6e2" strokeWidth=".7" />
      <path d="M8 14h10c0-6-10-6-10 0 0 7 7 7 10 4" fill="none" stroke="#fff" strokeWidth="2.600" />
    </svg>
  );
}

function Taskbar() {
  const item = "flex h-[30px] items-center justify-center";
  const open = "rounded-sm border border-[#5f7b97] bg-linear-to-br from-white/70 to-white/20";
  return (
    <footer className="relative flex h-8 items-center border-t border-[#5c7388] bg-linear-to-r from-[#a9c0da] via-[#b3cdea] via-55% to-[#859db3] to-70% text-white">
      <ImeBar />
      <button type="button" aria-label="开始" className="flex w-[47px] justify-center pr-1">
        <svg viewBox="0 0 30 30" className="size-[30px]" aria-hidden="true">
          <circle cx="15" cy="15" r="14" fill="#245b8e" stroke="#7fb1d6" />
          <path d="M2 12C5 1 25 1 28 12c-8 5-18 5-26 0z" fill="#6fa6d0" />
          <path d="M8 9c3-2 5-1 7 0l-1 6c-2-1-4-2-7 0z" fill="#ef6a35" />
          <path d="M16 10c2 1 4 1 7-1l-1 6c-3 2-5 1-7 0z" fill="#8ac24a" />
          <path d="M7 16c3-2 5-1 7 0l-1 6c-2-1-4-2-7 0z" fill="#4fa4e0" />
          <path d="M15 17c2 1 4 1 7-1l-1 6c-3 2-5 1-7 0z" fill="#f9d34b" />
        </svg>
      </button>
      <button type="button" aria-label="资源管理器" className={`${item} ${open} w-[43px]`}>
        <svg viewBox="0 0 28 24" className="h-6 w-7" aria-hidden="true">
          <path d="M2 4h7l2-3h7l1 2h6v17H2z" fill="#edcf7d" stroke="#c59b45" />
          <path d="M4 7h20v13H4z" fill="#f9e7aa" />
          <path d="M11 1h2v4h-2z" fill="#4cae50" /><path d="M15 1h2v4h-2z" fill="#d24a3c" />
          <path d="M6 14h16v9h-4v-5h-8v5H6z" fill="#8fc2e8" stroke="#5997c5" />
        </svg>
      </button>
      <button type="button" aria-label="浏览器" className={`${item} w-[57px]`}>
        <svg viewBox="0 0 26 26" className="size-[26px]" aria-hidden="true">
          <circle cx="13" cy="13" r="12" fill="#3a8bc8" stroke="#8fc4e6" />
          <path d="M3 8c3-5 9-7 14-5-5 0-9 2-14 5z" fill="#b9def3" />
          <path d="M6 9l6-2 5-3-1 5 5 2-5 2-1 4-4-4-5 7 1-8z" fill="#f6c533" stroke="#d18b1c" />
        </svg>
      </button>
      <button type="button" aria-label="安全浏览器" className={`${item} w-[46px]`}><Browser /></button>
      <button type="button" aria-label="安全浏览器 2" className={`${item} w-[51px]`}><Browser /></button>
      <button type="button" aria-label="AutoCAD" className={`${item} ${open} w-[45px]`}>
        <svg viewBox="0 0 26 26" className="size-6" aria-hidden="true">
          <path d="M0 0h26v26H0z" fill="#197c80" />
          <path d="M2 21 8 4h4l5 17M6 15h8" fill="none" stroke="#fff" strokeWidth="2.500" />
          <path d="M19 2v22M12 18h13M16 15h6v6h-6z" fill="none" stroke="#a7dcd9" strokeWidth="1.500" />
        </svg>
      </button>
      <button type="button" aria-label="画图" className={`${item} ${open} ml-0.5 w-[47px]`}>
        <svg viewBox="0 0 26 26" className="size-[26px]" aria-hidden="true">
          <path d="M2 14C3 5 17 3 22 9c4 6-3 6-4 9-2 7-8 7-10 3-1-4-7-1-6-7z" fill="#dff0fa" stroke="#6da8cf" />
          <circle cx="6" cy="12" r="2" fill="#e5543b" /><circle cx="10" cy="8.500" r="2" fill="#69b844" /><circle cx="15" cy="8" r="2" fill="#f2b22f" /><circle cx="11" cy="15" r="2.500" fill="#5a9fd4" />
          <path d="M22 5 14 23" stroke="#e88a24" strokeWidth="2.500" /><path d="M20 7l3-6 3 1-3 6z" fill="#b67a4c" />
        </svg>
      </button>
      <div className="ml-auto flex h-full items-center text-[10px]">
        <span>链接</span>
        <span className="mr-1.5 ml-1.5 self-start text-[12px] leading-3">»</span>
        <ul className="flex gap-[5px]">
          {tray.map((n) => <li key={n}><Icon name={n} className="size-[14px]" /></li>)}
        </ul>
        <time className="w-[66px] text-center leading-[14px]">14:35<br />2015/7/25</time>
        <button type="button" aria-label="显示桌面" className="h-full w-[11px] border border-[#61788e] bg-linear-to-b from-[#b8cbdc] to-[#7f98af]" />
      </div>
    </footer>
  );
}

export default function App() {
  return (
    <div className="flex min-h-screen flex-col overflow-hidden bg-[#f0f0f0] font-['Open_Sans','Noto_Sans_CJK_SC',sans-serif] text-black">
      <TitleBar />
      <MenuBar />
      <Toolbars />
      <main className="flex flex-1 border-t border-[#a0a0a0]">
        <ToolColumn names={drawTools} className="self-start border-r border-b border-[#a8a8a8]" size="h-[331px]" />
        <div className="ml-0.5 flex min-w-0 flex-1 flex-col border-t border-[#555]">
          <Canvas />
          <SheetTabs />
        </div>
        <div className="ml-0.5 flex items-start">
          <div className="self-stretch border-l border-white">
            <ToolColumn names={orderTools} className="" size="h-[70px]" />
          </div>
          <ToolColumn names={modifyTools} className="border-r border-b border-l border-[#a8a8a8] border-l-white" size="h-[296px]" />
        </div>
      </main>
      <div className="h-1 border-t border-[#e0e0e0]" />
      <CommandLine />
      <StatusBar />
      <Taskbar />
    </div>
  );
}
